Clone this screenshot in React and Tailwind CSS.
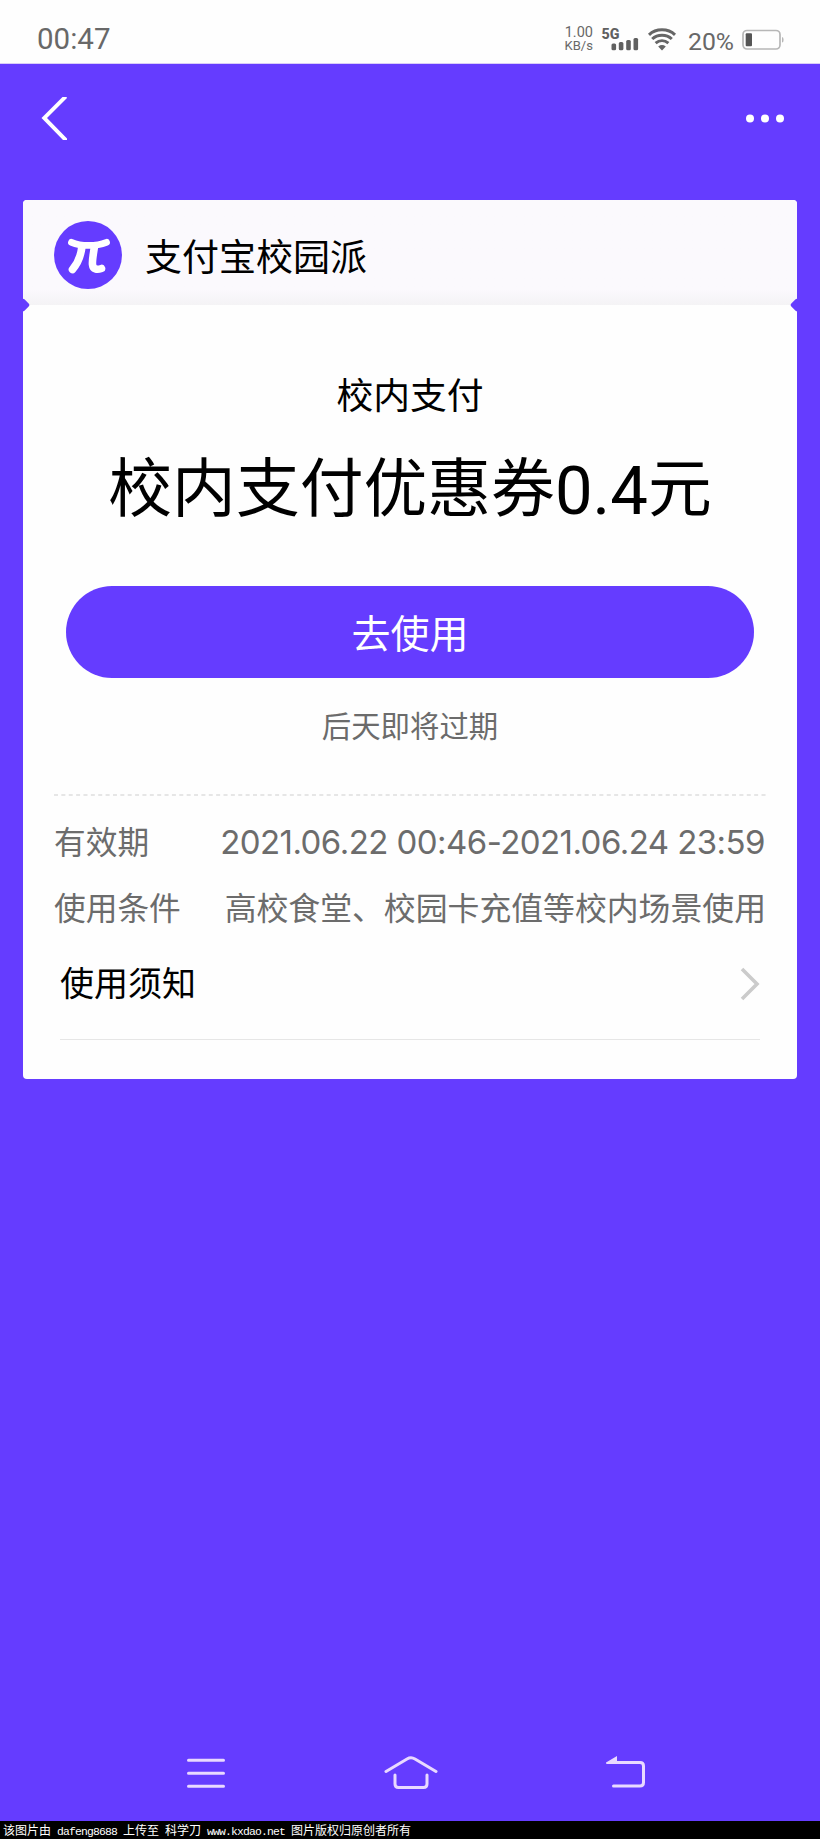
import React from 'react';

const details = [
  {
    label: '有效期',
    value: '2021.06.22 00:46-2021.06.24 23:59',
    className: "mr-px font-['Inter',sans-serif] text-[33px] tracking-[-0.55px]",
  },
  {
    label: '使用条件',
    value: '高校食堂、校园卡充值等校内场景使用',
    className: 'text-[31.85px] -mt-0.5',
  },
];

const StatusBar = () => (
  <header className="flex h-16 items-start justify-between border-b border-[#d9ccf8] bg-[#fefefe] pl-[37px] pr-9 text-[#686868]">
    <span className="mt-[22px] font-['Roboto',sans-serif] text-[29.5px] leading-[34px]">00:47</span>
    <div className="flex items-start font-['Roboto',sans-serif]">
      <div className="mr-2 mt-[26px] text-right leading-[13px]">
        <div className="text-[14.5px]">1.00</div>
        <div className="text-[13px]">KB/s</div>
      </div>
      {/* Signal and wifi */}
      <svg className="mt-[26px]" width="76" height="26" viewBox="0 0 76 26" fill="none">
        <text x="0.5" y="13" fill="#606060" fontSize="15.5" fontWeight="800" textLength="18" lengthAdjust="spacingAndGlyphs">5G</text>
        <g fill="#606060">
          <rect x="10.5" y="17.5" width="4.6" height="6.7" rx="1.5" />
          <rect x="17.8" y="16" width="4.6" height="8.2" rx="1.5" />
          <rect x="25.2" y="14" width="4.6" height="10.2" rx="1.5" />
          <rect x="32.5" y="12" width="4.6" height="12.2" rx="1.5" />
        </g>
        <g stroke="#666" strokeWidth="3">
          <path d="M48 8.8 C55 2.2 67 2.2 74 8.8" />
          <path d="M51.2 13 C56.5 8 65.5 8 70.8 13" />
          <path d="M54.6 17.2 C58.5 13.8 63.5 13.8 67.4 17.2" />
        </g>
        <path d="M57.2 20.4 Q61 17.6 64.8 20.4 L61 24.4 Z" fill="#666" />
      </svg>
      <span className="ml-[11px] mt-[27px] text-[24.8px] leading-[30px]">20%</span>
      {/* Battery */}
      <svg className="ml-2 mt-[29px]" width="42" height="22" viewBox="0 0 42 22" fill="none">
        <rect x="1" y="1.5" width="37" height="18.5" rx="4" stroke="#b7b7b7" strokeWidth="1.7" />
        <path d="M40 8 Q41.6 8 41.6 10.8 Q41.6 13.6 40 13.6 Z" fill="#b7b7b7" />
        <rect x="3.7" y="4.3" width="6.3" height="13" rx="1" fill="#555" />
      </svg>
    </div>
  </header>
);

const NavBar = () => (
  <div className="flex h-[136px] items-start justify-between pl-10 pr-9 pt-8">
    <svg width="28" height="46" viewBox="0 0 28 46" fill="none">
      <path d="M26.5 1 H22.5 L1.5 22 L23 44 H27 V42.5 L7 22 L27 2 Z" fill="#fff" />
    </svg>
    <svg className="mt-[18px]" width="38" height="10" viewBox="0 0 38 10" fill="#fff">
      <circle cx="4" cy="4.5" r="4" />
      <circle cx="19" cy="4.5" r="4" />
      <circle cx="34" cy="4.5" r="4" />
    </svg>
  </div>
);

const Logo = () => (
  <svg width="68" height="68" viewBox="0 0 68 68" fill="none">
    <circle cx="34" cy="34" r="34" fill="#653cff" />
    <g stroke="#fff" strokeLinecap="round" strokeLinejoin="round">
      <path d="M17.5 21.3 C27 25.5 42 25.5 52.5 21.3" strokeWidth="6.8" />
      <path d="M28 25 C27 35 24.5 41.5 18.5 48.5" strokeWidth="7.6" />
      <path d="M40.5 25 C39.5 33 38 39 38.5 43.5 C39 48.5 43 49 47.5 47.5" strokeWidth="7.6" />
    </g>
  </svg>
);

const Coupon = () => (
  <main className="relative mx-[23px] h-[879px] overflow-hidden rounded-[4px] bg-[#fefefe]">
    <div className="flex h-[105px] items-center bg-linear-to-b from-[#fbf9fd] from-85% to-[#f4f3f5] pl-[31px] pt-[5px]">
      <Logo />
      <h2 className="mt-px ml-[23px] text-[37px] leading-none">支付宝校园派</h2>
    </div>
    {/* Ticket notches */}
    <span className="absolute -left-[5px] top-[100px] size-2.5 rotate-45 rounded-[2px] bg-[#653cff]"></span>
    <span className="absolute -right-[5px] top-[100px] size-2.5 rotate-45 rounded-[2px] bg-[#653cff]"></span>

    <div className="flex flex-col items-center">
      <p className="mt-[70px] text-[36.8px] leading-[36px]">校内支付</p>
      <h1 className="mt-[40px] flex h-16 items-center whitespace-nowrap text-[63.8px] leading-[64px]">
        校内支付优惠券
        <span className="translate-y-2 font-['Roboto',sans-serif] text-[67px]">0.4</span>
        元
      </h1>
      <button className="mt-[71px] flex h-[92px] w-[688px] items-center justify-center rounded-full bg-[#653cff] pb-0.5 text-[39px] leading-none text-white">
        去使用
      </button>
      <p className="mt-[31px] text-[29.4px] leading-[30px] text-[#6b6b6b]">后天即将过期</p>
    </div>

    <svg className="ml-[31px] mt-[55px] block" width="712" height="2">
      <line x1="0" y1="1" x2="712" y2="1" stroke="#dedede" strokeWidth="1.5" strokeDasharray="4 3.37" />
    </svg>

    <div className="mt-[13px] px-[31px] text-[31.7px] text-[#6c6c6c]">
      {details.map((row) => (
        <div key={row.label} className="flex h-[66px] items-center justify-between whitespace-nowrap leading-none">
          <span className="-mt-0.5">{row.label}</span>
          <span className={row.className}>{row.value}</span>
        </div>
      ))}
    </div>

    <div className="mx-[37px] flex h-[99px] items-center justify-between border-b border-[#e6e6e6] pb-[13px]">
      <span className="-mt-[3px] text-[34px] leading-none">使用须知</span>
      <svg width="20" height="34" viewBox="0 0 20 34" fill="none">
        <path d="M2 2 L17 17 L2 32" stroke="#cbcbcb" strokeWidth="3.6" />
      </svg>
    </div>
  </main>
);

const SystemNav = () => (
  <nav className="mt-auto flex h-[70px] items-start pl-[186px] pt-1">
    <svg width="40" height="36" viewBox="0 0 40 36" fill="none" stroke="#e9d9ff" strokeWidth="3" strokeLinecap="round">
      <path d="M2.5 5.3 H37.5 M2.5 18.2 H37.5 M2.5 31.2 H37.5" />
    </svg>
    <svg className="ml-[158px]" width="54" height="36" viewBox="0 0 54 36" fill="none" stroke="#e9d9ff" strokeWidth="3" strokeLinecap="round">
      <path d="M2 16.5 L23 4 Q27 1.5 31 4 L52 16.5" />
      <path d="M11 20 V29 Q11 32.5 14.5 32.5 H39.5 Q43 32.5 43 29 V20" />
    </svg>
    <svg className="ml-[168px]" width="40" height="36" viewBox="0 0 40 36" fill="none">
      <path d="M6 7.5 H34 Q37.5 7.5 37.5 11 V27.5 Q37.5 31 34 31 H7.5" stroke="#e9d9ff" strokeWidth="3" strokeLinecap="round" />
      <path d="M0 8.5 V7.5 L11 1 V9 H1 Z" fill="#e9d9ff" />
    </svg>
  </nav>
);

const Latin = ({ children }) => (
  <span className="whitespace-pre font-['Liberation_Mono',monospace] text-[11.4px] tracking-[-0.84px]">{children}</span>
);

const Watermark = () => (
  <footer className="h-[18px] whitespace-nowrap bg-black pl-[3px] text-[12px] leading-[17px] text-white">
    该图片由<Latin>{' dafeng8688 '}</Latin>上传至<Latin> </Latin>科学刀<Latin>{' www.kxdao.net '}</Latin>图片版权归原创者所有
  </footer>
);

export default function App() {
  return (
    <div className="flex h-[1839px] w-[820px] flex-col overflow-hidden bg-[#653cff] font-['Noto_Sans_CJK_SC',sans-serif] text-black">
      <StatusBar />
      <NavBar />
      <Coupon />
      <SystemNav />
      <Watermark />
    </div>
  );
}
